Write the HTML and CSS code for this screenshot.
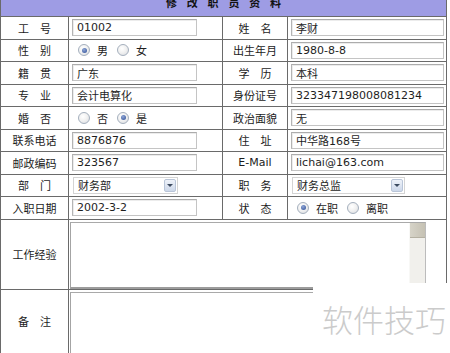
FILE: index.html
```html
<!DOCTYPE html>
<html lang="zh-CN">
<head>
<meta charset="utf-8">
<title>修改职员资料</title>
<link rel="stylesheet" href="styles.css">
</head>
<body>
<div class="form">
  <div class="title"><span>修 改 职 员 资 料</span></div>

  <div class="lbl">工　号</div>
  <div class="val"><input class="txt short" value="01002"></div>
  <div class="lbl">姓　名</div>
  <div class="val"><input class="txt long" value="李财"></div>

  <div class="lbl">性　别</div>
  <div class="val radios"><span class="radio on"></span><span class="rtext">男</span><span class="radio"></span><span class="rtext">女</span></div>
  <div class="lbl">出生年月</div>
  <div class="val"><input class="txt long" value="1980-8-8"></div>

  <div class="lbl">籍　贯</div>
  <div class="val"><input class="txt short" value="广东"></div>
  <div class="lbl">学　历</div>
  <div class="val"><input class="txt long" value="本科"></div>

  <div class="lbl">专　业</div>
  <div class="val"><input class="txt short" value="会计电算化"></div>
  <div class="lbl">身份证号</div>
  <div class="val"><input class="txt long" value="323347198008081234"></div>

  <div class="lbl">婚　否</div>
  <div class="val radios"><span class="radio"></span><span class="rtext">否</span><span class="radio on"></span><span class="rtext">是</span></div>
  <div class="lbl">政治面貌</div>
  <div class="val"><input class="txt long" value="无"></div>

  <div class="lbl">联系电话</div>
  <div class="val"><input class="txt short" value="8876876"></div>
  <div class="lbl">住　址</div>
  <div class="val"><input class="txt long" value="中华路168号"></div>

  <div class="lbl">邮政编码</div>
  <div class="val"><input class="txt short" value="323567"></div>
  <div class="lbl">E-Mail</div>
  <div class="val"><input class="txt long" value="lichai@163.com"></div>

  <div class="lbl">部　门</div>
  <div class="val"><div class="sel sel-dept"><span class="sel-text">财务部</span><span class="sel-btn"></span></div></div>
  <div class="lbl">职　务</div>
  <div class="val"><div class="sel sel-job"><span class="sel-text">财务总监</span><span class="sel-btn"></span></div></div>

  <div class="lbl">入职日期</div>
  <div class="val"><input class="txt short" value="2002-3-2"></div>
  <div class="lbl">状　态</div>
  <div class="val radios"><span class="radio on"></span><span class="rtext">在职</span><span class="radio"></span><span class="rtext">离职</span></div>

  <div class="lbl">工作经验</div>
  <div class="val wide"><div class="tbox"><div class="tbox-area"></div><div class="sbar"><div class="sbar-btn"></div></div></div></div>

  <div class="lbl">备　注</div>
  <div class="val wide"><div class="tbox tall"><div class="tbox-area"></div><div class="sbar"><div class="sbar-btn"></div></div></div></div>
</div>
<div class="watermark">软件技巧</div>
</body>
</html>
```
FILE: styles.css
```css
html, body {
  margin: 0;
  padding: 0;
  background: #ffffff;
  overflow: hidden;
  height: 353px;
}

body {
  font-family: "DejaVu Sans", "Noto Sans CJK SC", sans-serif;
  font-size: 11px;
  color: #1e1e1e;
  position: relative;
}

.form {
  width: 445px;
  padding: 0 1px;
  display: grid;
  grid-template-columns: 67px 153px 64px 158px;
  grid-template-rows: 16px repeat(9, 21.5px) 69px 63.5px;
  gap: 1px;
  background: #6a6a6a;
}

.title {
  grid-column: 1 / -1;
  background: #9e9ce4;
  overflow: hidden;
  text-align: center;
}

.title span {
  display: block;
  margin-top: -2px;
  line-height: 11px;
  font-weight: bold;
  letter-spacing: 3px;
  color: #111;
  padding-left: 3px;
}

.lbl {
  background: #ffffff;
  display: flex;
  align-items: center;
  justify-content: center;
  color: #1c1c1c;
  white-space: nowrap;
}

.val {
  background: #ffffff;
  display: flex;
  align-items: center;
}

.val.wide {
  grid-column: 2 / 5;
  align-items: flex-start;
  padding-top: 2px;
}

.txt {
  box-sizing: border-box;
  height: 17px;
  margin: 0 0 0 3px;
  padding: 0 4px;
  border: 1px solid #c4c4c4;
  border-top-color: #acacac;
  border-left-color: #b4b4b4;
  box-shadow: inset 1px 1px 0 #ececec;
  background: #ffffff;
  font-family: "DejaVu Sans", "Noto Sans CJK SC", sans-serif;
  font-size: 11px;
  color: #1e1e1e;
  outline: none;
}

.txt.short { width: 125px; }
.txt.long { width: 153px; }

.radios {
  padding-left: 9px;
}

.radio {
  position: relative;
  box-sizing: border-box;
  width: 12px;
  height: 12px;
  border-radius: 50%;
  border: 1px solid #a4afbd;
  background: radial-gradient(circle at 40% 35%, #ffffff 0%, #f2f2f2 45%, #d6d9de 100%);
  flex: none;
}

.radio.on::after {
  content: "";
  position: absolute;
  left: 2.5px;
  top: 2.5px;
  width: 5px;
  height: 5px;
  border-radius: 50%;
  background: radial-gradient(circle at 40% 35%, #8fa6d6 0%, #4a67a8 70%, #35508e 100%);
}

.rtext {
  margin: 0 9px 0 7px;
}

.sel {
  box-sizing: border-box;
  height: 17px;
  display: flex;
  align-items: center;
  justify-content: space-between;
  border: 1px solid #d4d4d4;
  background: #ffffff;
  padding: 0 1px 0 4px;
}

.sel-dept { width: 105px; margin-left: 4px; }
.sel-job { width: 113px; margin-left: 4px; }

.sel-btn {
  position: relative;
  box-sizing: border-box;
  width: 12px;
  height: 13px;
  border: 1px solid #b9c5d8;
  border-radius: 2px;
  background: linear-gradient(#eef2f9, #cdd8ea);
}

.sel-btn::after {
  content: "";
  position: absolute;
  left: 2px;
  top: 4px;
  border-left: 3px solid transparent;
  border-right: 3px solid transparent;
  border-top: 3px solid #3c4a60;
}

.tbox {
  box-sizing: border-box;
  width: 356px;
  height: 67px;
  margin-left: 1px;
  display: flex;
  border: 1px solid #bcbcbc;
  border-top-color: #a9a9a9;
  border-left-color: #a4a4a4;
  border-bottom: 2px solid #9c9c9c;
  background: #ffffff;
}

.tbox.tall {
  height: 70px;
}

.tbox-area {
  flex: 1;
}

.sbar {
  width: 15px;
  background: #f1f0ec;
  border-left: 1px solid #f8f8f6;
}

.sbar-btn {
  height: 14px;
  background: linear-gradient(90deg, #d6d3c8, #c5c1b3);
  border-bottom: 1px solid #b4b0a2;
}

.watermark {
  position: absolute;
  left: 313px;
  top: 283px;
  width: 137px;
  height: 70px;
  box-sizing: border-box;
  padding: 20px 0 0 9px;
  background: #ffffff;
  font-family: "Noto Sans CJK SC", sans-serif;
  font-weight: 300;
  font-size: 31px;
  line-height: 31px;
  color: #cbcbcb;
  white-space: nowrap;
}
```
